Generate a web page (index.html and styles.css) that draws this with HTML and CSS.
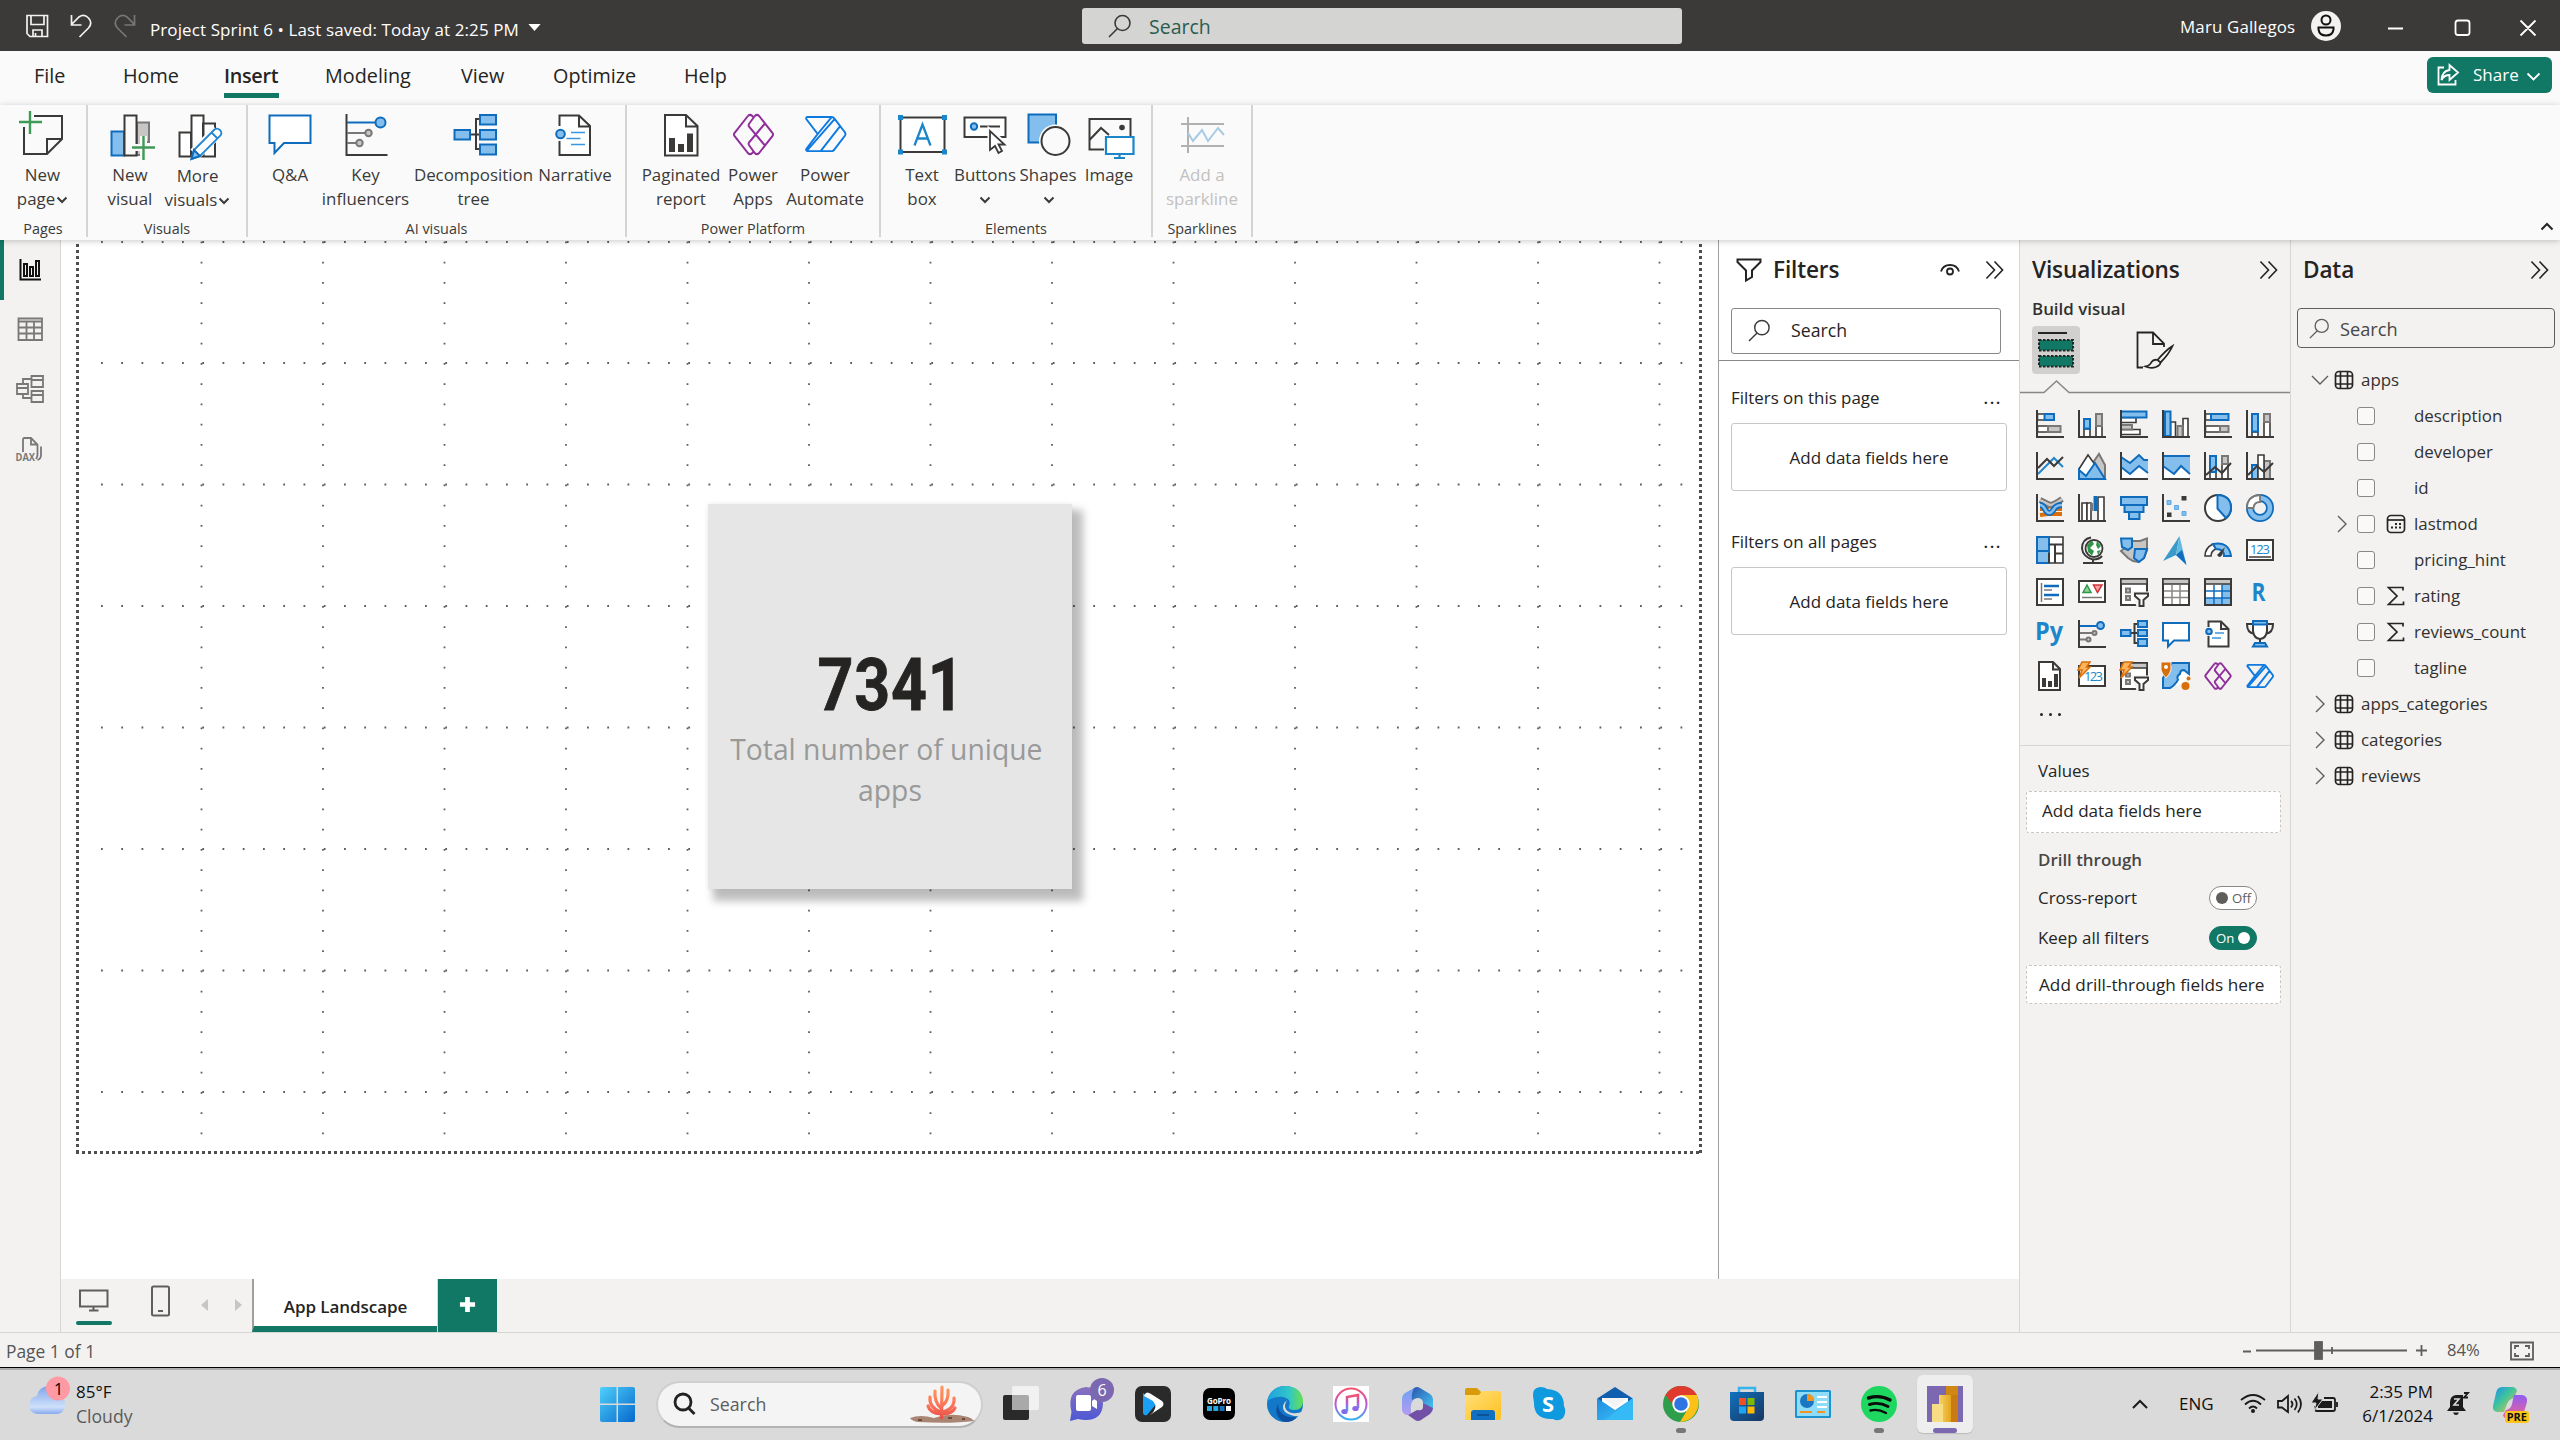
FILE: index.html
```html
<!DOCTYPE html>
<html lang="en">
<head>
<meta charset="utf-8">
<title>Project Sprint 6</title>
<link rel="stylesheet" href="styles.css">
</head>
<body>
<svg class="defs" aria-hidden="true">
  <defs>
    <symbol id="mag" viewBox="0 0 24 24"><circle cx="14.500" cy="9" r="7.500"/><path d="M9.500 14.500L1 23"/></symbol>
    <symbol id="chevs" viewBox="0 0 20 20"><path d="M1.500 1L10 10L1.500 19M10 1L18.500 10L10 19"/></symbol>
    <symbol id="tbl" viewBox="0 0 20 20"><rect x="1.500" y="1.500" width="17" height="17" rx="3.500"/><path d="M1.500 6H18.500M1.500 14H18.500M6.500 1.500V18.500M13.500 1.500V18.500"/></symbol>
    <symbol id="down" viewBox="0 0 12 8"><path d="M1.500 1.500L6 6L10.500 1.500"/></symbol>
    <symbol id="apps" viewBox="0 0 44 44"><path d="M16.500 2.800L2.500 20.500Q1.500 22 2.500 23.500L16.500 41.200Q18.500 43 20.500 41.200L22 39.500M16.500 2.800Q18.500 1 20.500 2.800L22 4.500M23.500 2.800Q25.500 1 27.500 2.800L41.500 20.500Q42.500 22 41.500 23.500L27.500 41.200Q25.500 43 23.500 41.200L17.500 33Q16.500 31.500 17.500 30L33.500 11M33.500 33L17.500 14Q16.500 12.500 17.500 11L23.500 2.800"/></symbol>
    <symbol id="auto" viewBox="0 0 44 44"><path d="M3.500 4.500H28.500Q30 4.500 31 6L42 20.500Q43 22 42 23.500L31 38Q30 39.500 28.500 39.500H3.500Q1.500 39 2.500 37L14 22L2.500 7Q1.500 5 3.500 4.500ZM14 22L28.500 4.500M3 39L31.500 6.500M17 39.500L37 14"/></symbol>
    <linearGradient id="gWin" x1="0" y1="0" x2="1" y2="1"><stop offset="0" stop-color="#4fd0fb"/><stop offset="1" stop-color="#0568cc"/></linearGradient>
    <linearGradient id="gCloud" x1="0" y1="0" x2="0" y2="1"><stop offset="0" stop-color="#7ea5ea"/><stop offset=".75" stop-color="#cfe0fb"/><stop offset="1" stop-color="#86aaf0"/></linearGradient>
    <linearGradient id="gCoral" x1="0" y1="0" x2="0" y2="1"><stop offset="0" stop-color="#ff9a5e"/><stop offset=".6" stop-color="#fb7257"/><stop offset="1" stop-color="#e8504a"/></linearGradient>
    <linearGradient id="gChat" x1="0" y1="0" x2="0" y2="1"><stop offset="0" stop-color="#8a70bd"/><stop offset="1" stop-color="#4c57d6"/></linearGradient>
    <linearGradient id="gEdge" x1="0" y1="0" x2="1" y2="0"><stop offset="0" stop-color="#1f9fe0"/><stop offset=".6" stop-color="#30c5c9"/><stop offset="1" stop-color="#66e04f"/></linearGradient>
    <linearGradient id="gTunes" x1="0" y1="0" x2="0" y2="1"><stop offset="0" stop-color="#f4516c"/><stop offset=".55" stop-color="#b45be0"/><stop offset="1" stop-color="#35b3f2"/></linearGradient>
    <linearGradient id="gM1" x1="0" y1="0" x2="0" y2="1"><stop offset="0" stop-color="#6ea3f4"/><stop offset="1" stop-color="#b49af0"/></linearGradient>
    <linearGradient id="gM2" x1="0" y1="0" x2="1" y2="1"><stop offset="0" stop-color="#2a55ad"/><stop offset="1" stop-color="#48c8f5"/></linearGradient>
    <linearGradient id="gFold" x1="0" y1="0" x2="1" y2="1"><stop offset="0" stop-color="#ffe07a"/><stop offset="1" stop-color="#ffc020"/></linearGradient>
    <linearGradient id="gStore" x1="0" y1="0" x2="1" y2="1"><stop offset="0" stop-color="#1172c0"/><stop offset="1" stop-color="#18355f"/></linearGradient>
    <linearGradient id="gMail" x1="0" y1="0" x2="1" y2="1"><stop offset="0" stop-color="#1f8be0"/><stop offset="1" stop-color="#3cc3f8"/></linearGradient>
    <linearGradient id="gBi" x1="0" y1="0" x2="1" y2="0"><stop offset="0" stop-color="#f7d264"/><stop offset="1" stop-color="#e3a51e"/></linearGradient>
    <linearGradient id="gCo" x1="0" y1="0" x2="1" y2="1"><stop offset="0" stop-color="#1e8ff0"/><stop offset=".45" stop-color="#3fc49c"/><stop offset="1" stop-color="#f5c33b"/></linearGradient>
    <linearGradient id="gCo2" x1="0" y1="0" x2="0" y2="1"><stop offset="0" stop-color="#8f5cf5"/><stop offset="1" stop-color="#f4658a"/></linearGradient>
  </defs>
</svg>

<header class="titlebar">
  <svg class="tb-icons" viewBox="0 0 120 30"><g class="w"><path d="M3 4.500H23.500V25.500H6L3 22.500Z"/><path d="M7 4.500V13.500H20V4.500M9 25.500V19H18V25.500M11.500 22V25"/><path d="M47.500 4V14H57.500M47.500 13.500L55 6Q60 2.500 64.500 7Q69 12 64.500 17L55.500 26"/></g><g class="w dim"><path d="M110.500 4V14H100.500M110.500 13.500L103 6Q98 2.500 93.500 7Q89 12 93.500 17L102.500 26"/></g></svg>
  <span class="doc">Project Sprint 6 • Last saved: Today at 2:25 PM</span>
  <svg class="doc-caret" viewBox="0 0 14 8"><path d="M0 0H14L7 8Z"/></svg>
  <div class="top-search"><svg><use href="#mag"/></svg><span>Search</span></div>
  <div class="user">
    <span>Maru Gallegos</span>
    <svg class="avatar" viewBox="0 0 30 30"><circle cx="15" cy="15" r="15" fill="#f3f2f1"/><g fill="none" stroke="#111" stroke-width="2"><circle cx="15" cy="9" r="4.500"/><path d="M7.500 16.500H22.500V18.500Q21.500 24.500 15 24.500Q8.500 24.500 7.500 18.500Z"/></g></svg>
  </div>
  <svg class="win-btns" viewBox="0 0 150 18"><path d="M1 9.500H16M68.500 4Q68.500 1.500 71 1.500H80Q82.500 1.500 82.500 4V13.500Q82.500 16 80 16H71Q68.500 16 68.500 13.500ZM133.500 1.500L148.500 16.500M148.500 1.500L133.500 16.500"/></svg>
</header>

<nav class="tabs">
  <span class="tab t-file">File</span><span class="tab t-home">Home</span><span class="tab t-insert on">Insert</span><span class="tab t-model">Modeling</span><span class="tab t-view">View</span><span class="tab t-opt">Optimize</span><span class="tab">Help</span>
  <button class="share"><svg viewBox="0 0 24 24"><path d="M8 4.500H2.500V21.500H19.500V17M13.500 7V2L22 9.500L13.500 17V12Q8 12 5.500 17Q6 8 13.500 7Z"/></svg><span>Share</span><svg class="sc" viewBox="0 0 14 9"><path d="M1 1.500L7 7.500L13 1.500"/></svg></button>
</nav>

<section class="ribbon">
  <div class="group g-pages"><div class="items">
    <div class="item w70"><svg viewBox="0 0 48 48"><path class="k" fill="#fafafa" d="M15 6H43V29L28 44H5V17M28 44V29H43"/><path class="gp" d="M0 12H23M11 1V24"/></svg><span>New<br>page<svg class="dn"><use href="#down"/></svg></span></div>
  </div><div class="glabel">Pages</div></div>

  <div class="group g-visuals"><div class="items">
    <div class="item w66"><svg viewBox="0 0 48 48"><path class="ga" d="M31 12.500H43V32H38V45H31Z"/><path class="bl" d="M5.500 21.500H18V45.500H5.500Z"/><path class="k" fill="#fafafa" d="M18.500 5.500H30.500V45.500H18.500Z"/><path stroke="#fafafa" stroke-width="7" d="M37.500 26V50M26 37.500H49"/><path class="gp" d="M37.500 26V50M26 37.500H49"/></svg><span>New<br>visual</span></div>
    <div class="item w70 low"><svg viewBox="0 0 48 48"><path class="k" fill="#fff" d="M5.500 22.500H17V46.500H5.500ZM29 13.500H41V46.500H29ZM17.500 5.500H29.500V46.500H17.500Z"/><path stroke="#fafafa" stroke-width="13" d="M21 44L44 21"/><path fill="#fff" stroke="#1f86d2" stroke-width="1.800" d="M17.500 49L20 40L40.500 19.500Q43 17.500 46 20Q48.500 23 46.500 25.500L26 46ZM37.500 22.500L43.500 28.500"/><path class="bl" stroke-width="1" d="M17.500 49L20 40L26 46Z"/></svg><span>More<br>visuals<svg class="dn"><use href="#down"/></svg></span></div>
  </div><div class="glabel">Visuals</div></div>

  <div class="group g-ai"><div class="items">
    <div class="item w58"><svg viewBox="0 0 48 48"><path class="bo" d="M3.500 5.500H44.500V33H18L8.500 43V33H3.500Z"/></svg><span>Q&amp;A</span></div>
    <div class="item w92"><svg viewBox="0 0 48 48"><path class="k" d="M4.500 4V45H45.500"/><path class="bo" d="M5 12.500H34"/><circle class="bl" cx="38.500" cy="12.500" r="5"/><path stroke="#7a7876" stroke-width="2" d="M5 23H23M5 33H14"/><g class="ga"><circle cx="26.500" cy="23" r="3.200"/><circle cx="17.500" cy="33" r="3.200"/></g></svg><span>Key<br>influencers</span></div>
    <div class="item w124"><svg viewBox="0 0 48 48"><path class="k" d="M20 24.500H30M30 9H26V39H30"/><path class="bl" d="M4.500 20H20V29.500H4.500ZM30 5H46V14.500H30ZM30 20H46V29.500H30ZM30 34.500H46V44.500H30Z"/></svg><span>Decomposition<br>tree</span></div>
    <div class="item w80"><svg viewBox="0 0 48 48"><path class="k" fill="#fff" d="M8.500 16V5.500H28L39 16V45H8.500V31M28 5.500V16.500H39"/><circle class="bl" cx="9.500" cy="24" r="4.300"/><path stroke="#3a96dd" stroke-width="1.700" d="M20 22.500H34M15.500 28.500H29.500M20 34.500H34"/></svg><span>Narrative</span></div>
  </div><div class="glabel">AI visuals</div></div>

  <div class="group g-pp"><div class="items">
    <div class="item w80"><svg viewBox="0 0 48 48"><path class="k" fill="#fff" d="M8 5H29L40.500 16V45.500H8ZM29 5V16.500H40.500"/><path fill="#3b3a39" d="M12 28H18V42H12ZM21 34H27V42H21ZM30 23.500H36V42H30Z"/></svg><span>Paginated<br>report</span></div>
    <div class="item w64"><svg viewBox="0 0 48 48"><use href="#apps" class="pu" x="3" y="3" width="43" height="43"/></svg><span>Power<br>Apps</span></div>
    <div class="item w80"><svg viewBox="0 0 48 48"><use href="#auto" class="bu" x="2" y="2.500" width="45" height="43"/></svg><span>Power<br>Automate</span></div>
  </div><div class="glabel">Power Platform</div></div>

  <div class="group g-el"><div class="items">
    <div class="item w64"><svg viewBox="0 0 48 48"><path class="k" fill="#fff" d="M2.500 7.500H46.500V42H2.500Z"/><path fill="#1c86cb" d="M0 5H5V10H0ZM44 5H49V10H44ZM0 39.500H5V44.500H0ZM44 39.500H49V44.500H44Z"/><path fill="none" stroke="#1c86cb" stroke-width="2.300" d="M16.500 35.500L24.500 14.500L32.500 35.500M19.500 28.500H29.500"/></svg><span>Text<br>box</span></div>
    <div class="item w62"><svg viewBox="0 0 48 48"><path class="k" fill="#fff" d="M3.500 7.500H44.500V27H3.500Z"/><circle class="bl" cx="13" cy="16.500" r="3.200"/><path class="k" d="M19 16.500H39"/><path fill="#fff" stroke="#fafafa" stroke-width="5" d="M29 21V40L34 36L38 43L41 41L38 34H44Z"/><path fill="#fff" stroke="#3b3a39" stroke-width="1.800" d="M29 21V40L34 36L37.500 43L41 41L37.500 34.500H43.500Z"/></svg><span>Buttons<br><svg class="dn"><use href="#down"/></svg></span></div>
    <div class="item w64"><svg viewBox="0 0 48 48"><path class="bl" d="M4.500 4.500H32V32.500H4.500Z"/><circle cx="31.500" cy="31" r="16.500" fill="#fafafa"/><circle class="k" cx="31.500" cy="31" r="14"/></svg><span>Shapes<br><svg class="dn"><use href="#down"/></svg></span></div>
    <div class="item w58"><svg viewBox="0 0 48 48"><path class="k" d="M45.500 26V9H4.500V39.500H19M4.500 30L16 18L24 25"/><circle cx="37" cy="17.500" r="2.800" fill="#3b3a39"/><path fill="#fff" stroke="#1c86cb" stroke-width="2.200" d="M21 27H48.500V44H21ZM34.500 44V48M29 48H40"/></svg><span>Image</span></div>
  </div><div class="glabel">Elements</div></div>

  <div class="group g-sp"><div class="items">
    <div class="item w80 off"><svg viewBox="0 0 48 48"><path fill="none" stroke="#b3b1af" stroke-width="2" d="M3 14H46M3 36H46M10 7V43"/><path fill="none" stroke="#a7cbe4" stroke-width="2" d="M10 23L15 31L24 20L30 31L40 18L46 25"/></svg><span>Add a<br>sparkline</span></div>
  </div><div class="glabel">Sparklines</div></div>
  <svg class="collapse" viewBox="0 0 14 9"><path d="M1.500 7.500L7 2L12.500 7.500"/></svg>
</section>

<main class="work">
  <aside class="rail">
    <div class="rcell on"><svg class="ink" viewBox="0 0 28 28"><path d="M4.500 3V23.500H25M8 8H11V20H8ZM14 11H17V20H14ZM20 5H23V20H20Z"/></svg></div>
    <div class="rcell"><svg viewBox="0 0 28 28"><path d="M2.500 2.500H26V24H2.500ZM2.500 5.500H26M2.500 11.500H26M2.500 17.500H26M10.500 5.500V24M18 5.500V24"/></svg></div>
    <div class="rcell"><svg viewBox="0 0 28 28"><path d="M15.500 0H27V11H15.500ZM15.500 4H27M15.500 15H27V26H15.500ZM15.500 19H27M1 8H12V18H1ZM1 12H12M7 8V3H15.500M7 18V22H15.500"/></svg></div>
    <div class="rcell"><svg viewBox="0 0 28 28"><path d="M7 16V3.500Q7 2 8.500 2H15L21.500 8.500V19Q21.500 21 20 23M15 2V8.500H21.500M25 10.500V19Q25 23 21.500 24"/><text x="-.5" y="25" textLength="19.500" lengthAdjust="spacingAndGlyphs">DAX</text></svg></div>
  </aside>

  <div class="center">
    <div class="upper">
      <div class="canvas">
        <svg class="page" viewBox="61 240 1657 1038">
          <g class="grid">
            <path d="M101 242H1697M101 363H1697M101 484.500H1697M101 606H1697M101 727.500H1697M101 849H1697M101 970.500H1697M101 1092H1697"/>
            <path d="M201.500 241.500V1148M323 241.500V1148M444.500 241.500V1148M566 241.500V1148M687.500 241.500V1148M809 241.500V1148M930.500 241.500V1148M1052 241.500V1148M1173.500 241.500V1148M1295 241.500V1148M1416.500 241.500V1148M1538 241.500V1148M1659.500 241.500V1148"/>
          </g>
          <path class="edge" d="M77.500 244V1153M1700.500 244V1153M76 1152.500H1702"/>
        </svg>
        <div class="card"><div class="num">7341</div><div class="cap">Total number of unique&nbsp;<br>apps</div></div>
      </div>
      <aside class="filters">
        <div class="phead"><svg class="funnel" viewBox="0 0 26 24"><path d="M1.500 1.500H24.500V4L16 12.500V19L10 22.500V12.500L1.500 4Z"/></svg><h2>Filters</h2><svg class="eye" viewBox="0 0 20 14"><path d="M1 8.500Q3 2 10 2Q17 2 19 8.500"/><circle cx="10" cy="8.500" r="3"/></svg><svg class="chev"><use href="#chevs"/></svg></div>
        <div class="fsearch"><svg><use href="#mag"/></svg><span>Search</span></div>
        <div class="fsec first"><div class="frow"><span>Filters on this page</span><i>...</i></div><div class="fbox">Add data fields here</div></div>
        <div class="fsec"><div class="frow"><span>Filters on all pages</span><i>...</i></div><div class="fbox">Add data fields here</div></div>
      </aside>
    </div>
    <footer class="pages">
      <svg class="views" viewBox="0 0 112 53"><path d="M19 11.500H46.500V27.500H19ZM32.500 28V31M28 31.500H37.500M91 9Q91 7.500 92.500 7.500H106.500Q108 7.500 108 9V35Q108 36.500 106.500 36.500H92.500Q91 36.500 91 35ZM97 32H102"/><rect x="15" y="42" width="36" height="4" rx="2" fill="#117865"/></svg>
      <svg class="arrows" viewBox="0 0 40 12"><path d="M7 0V12L0 6ZM34 0V12L41 6Z"/></svg>
      <div class="ptab">App Landscape</div>
      <div class="padd"><svg viewBox="0 0 18 18"><path d="M9 1V17M1 9H17"/></svg></div>
    </footer>
  </div>

  <aside class="viz">
    <div class="phead"><h2>Visualizations</h2><svg class="chev"><use href="#chevs"/></svg></div>
    <h3>Build visual</h3>
    <div class="modes">
      <div class="mode"><svg viewBox="0 0 36 36"><path stroke="#252423" stroke-width="2" d="M0 1H29"/><path fill="#117865" stroke="#252423" stroke-width="2" stroke-dasharray="2.500 1.500" d="M1 8H35V18.500H1ZM1 24H35V34.500H1Z"/></svg></div>
      <svg class="fmt" viewBox="0 0 38 38"><path d="M7 36.500H1.500V1.500H17L28 12.500V16M17 1.500V13H28M36.500 15Q30 19 21.500 29L24.500 31.500Q33 23 36.500 15ZM21.500 29Q17.500 28 15.500 31Q14 34.500 9.500 35.500Q15 38 20 36Q24.500 34 24.500 31.500"/></svg>
    </div>
    <svg class="notch" viewBox="0 0 270 14"><path d="M0 12.500H24L36.500 1L49 12.500H270"/></svg>
    <div class="vgrid">
      <svg viewBox="0 0 28 28"><path class="wh" d="M1.500 4H9V10H1.500ZM1.500 16H12V22H1.500Z"/><path class="bl" d="M8.500 4H18V10H8.500Z"/><path class="ga" d="M12 16H24.500V22H12Z"/><path class="k" d="M1 0V27H28"/></svg>
      <svg viewBox="0 0 28 28"><path class="wh" d="M6 19H12V27H6ZM18 16H24V27H18Z"/><path class="bl" d="M6 9H12V18.500H6Z"/><path class="ga" d="M18 4H24V16H18Z"/><path class="k" d="M1 0V27H28"/></svg>
      <svg viewBox="0 0 28 28"><path class="wh" d="M1 7.500H16V12.500H1ZM1 19.500H20V24.500H1Z"/><path class="ga" d="M1 15H12V19.500H1Z"/><path class="bl" d="M1 1.500H26.500V7.500H1Z"/><path class="k" d="M1 0V27H28"/></svg>
      <svg viewBox="0 0 28 28"><path class="wh" d="M8.500 12H13.500V27H8.500ZM21 8.500H26V27H21Z"/><path class="ga" d="M15.500 16H20.500V27H15.500Z"/><path class="bl" d="M3 1.500H8.500V26H3Z"/><path class="k" d="M1 0V27H28"/></svg>
      <svg viewBox="0 0 28 28"><path class="wh" d="M1.500 4H7V10H1.500ZM1.500 16H16V22H1.500Z"/><path class="bl" d="M7 4H24.500V10H7Z"/><path class="ga" d="M16 16H24.500V22H16Z"/><path class="k" d="M1 0V27H28"/></svg>
      <svg viewBox="0 0 28 28"><path class="wh" d="M6 22H12V27H6ZM18 12H24V27H18Z"/><path class="bl" d="M6 4H12V21.500H6Z"/><path class="ga" d="M18 4H24V12H18Z"/><path class="k" d="M1 0V27H28"/></svg>

      <svg viewBox="0 0 28 28"><path fill="none" stroke="#1f86d2" stroke-width="2" d="M2 22L18 6L27 15"/><path class="k" d="M2 16L11 7L18 14L27 5"/><path class="k" d="M1 0V27H28"/></svg>
      <svg viewBox="0 0 28 28"><path class="ga" d="M14 12L21 2L27 13V26H18Z"/><path class="wh" d="M1 17L10 3L18 14L12 26H1Z"/><path class="bl" d="M1 18L8 24L17 11L27 27H1Z"/></svg>
      <svg viewBox="0 0 28 28"><path fill="#fff" d="M2 10H27V26H2Z"/><path fill="#83beec" d="M1 5L10 11L19 3L24 8H28V21L19 14L10 22L1 15Z"/><path fill="none" stroke="#0f6cbd" stroke-width="2" d="M1 5L10 11L19 3L24 8H28M1 15L10 22L19 14L28 21"/><path class="k" d="M1 0V27H28"/></svg>
      <svg viewBox="0 0 28 28"><path fill="#fff" d="M2 10H27V26H2Z"/><path fill="#83beec" d="M1 4H28V21L19 14L12 22L1 14Z"/><path fill="none" stroke="#0f6cbd" stroke-width="2" d="M1 4H28M1 14L12 22L19 14L28 22"/><path class="k" d="M1 0V27H28"/></svg>
      <svg viewBox="0 0 28 28"><path class="wh" d="M6 18H12V27H6ZM18 12H24V27H18Z"/><path class="bl" d="M6 4H12V20H6Z"/><path class="ga" d="M18 4H24V12H18Z"/><path class="k" d="M2 23L11 15L18 21L27 11M1 0V27H28"/></svg>
      <svg viewBox="0 0 28 28"><path class="bl" d="M6 13H12V27H6Z"/><path class="ga" d="M18 9H24V27H18Z"/><path class="wh" d="M12 3H18V27H12Z"/><path class="k" d="M2 23L11 14L18 20L27 11M1 0V27H28"/></svg>

      <svg viewBox="0 0 28 28"><path fill="none" stroke="#d86f0a" stroke-width="4" d="M4 15H9Q15 10 20 15H26M4 21L12 20H26"/><path fill="none" stroke="#7a7876" stroke-width="6" d="M4 6Q10 9 14 11Q18 11 26 5"/><path fill="none" stroke="#c8c6c4" stroke-width="2.500" d="M4 6Q10 9 14 11Q18 11 26 5"/><path fill="none" stroke="#0f6cbd" stroke-width="6" d="M4 11Q7 11 9 15Q13 23 18 15Q20 11 26 11"/><path fill="none" stroke="#83beec" stroke-width="2.500" d="M4 11Q7 11 9 15Q13 23 18 15Q20 11 26 11"/><path class="k" d="M1 0V27H28"/></svg>
      <svg viewBox="0 0 28 28"><path class="wh" d="M4 9H9V27H4ZM20 3H26V27H20Z"/><path class="wh" d="M9 9H13V27H9Z"/><path fill="#7a7876" d="M12 9H15V17H12Z"/><path fill="#0f6cbd" d="M15.500 2H19V17H15.500Z"/><path class="k" d="M1 0V27H28"/></svg>
      <svg viewBox="0 0 28 28"><path class="bl" d="M1 3H27V11H1ZM4.500 11H23.500V18H4.500ZM9 18H19.500V25H9Z"/></svg>
      <svg viewBox="0 0 28 28"><path fill="#83beec" stroke="#5da7e2" d="M5 6.500H9V10.500H5ZM12.500 11.500H16.500V15.500H12.500ZM20 17.500H24V21.500H20Z"/><path fill="#3b3a39" d="M19.500 2H24.500V6.500H19.500ZM5 18.500H9.500V23H5Z"/><path class="k" d="M1 0V27H28"/></svg>
      <svg viewBox="0 0 28 28"><circle class="k" cx="14" cy="14" r="13" fill="#fff"/><path class="bl" d="M13.500 1V14.500L22 24Q27 19.500 27 14Q27 1.500 13.500 1Z"/></svg>
      <svg viewBox="0 0 28 28"><circle cx="14" cy="14" r="10" fill="none" stroke="#0f6cbd" stroke-width="8"/><circle cx="14" cy="14" r="10" fill="none" stroke="#83beec" stroke-width="4.500"/><path fill="#fff" stroke="#7a7876" stroke-width="1.800" d="M1 14Q1 2 14 1V8Q8 8 7.500 14Z"/></svg>

      <svg viewBox="0 0 28 28"><path class="wh" d="M1 1H27V27H1Z"/><path class="bl" d="M1 1H13V15H1ZM1 15H13V27H1Z"/><path class="k" d="M13 8.500H27M19 8.500V27M13 17V27M19 17.500H27"/></svg>
      <svg viewBox="0 0 28 28"><circle cx="16" cy="12.500" r="8.500" fill="#fff" stroke="#3b3a39" stroke-width="1.800"/><path fill="#2f9547" d="M9 9L14 4.500L16 8L12 12L16 15L14 19.500L10 16ZM19 5L23 10L20 13L18 9ZM19 15L23 14L20 19Z"/><path class="k" d="M13 1.500Q4 3 4 12.500Q5 21 15 23.500Q21 23.500 24 20M15 23.500V27M5 27H25"/></svg>
      <svg viewBox="0 0 28 28"><path class="ga" d="M13 5H20L27 2.500V14L24 22L18 26L13 25L8 22L1 15Z"/><path class="bl" d="M1 2.500H12V11L8 14L2 11ZM15 13H27L24 22L19 26L14 22Z"/></svg>
      <svg viewBox="0 0 28 28"><path fill="#3a9bca" d="M17.500 0L1 25L14 19Z"/><path fill="#63b9e0" d="M17.500 0L14 19L24.500 29Z"/><path fill="#106ebe" d="M14 19L24.500 29L20 14Z"/></svg>
      <svg viewBox="0 0 28 28"><path class="wh" d="M1 20Q1 12 9 8L12 13Q7 15 7 20Z"/><path class="bl" d="M9 8Q25 5 27 20H20Q20 13 12 13Z"/><path fill="#3b3a39" d="M21 11L18 19Q16 23 13 19Z"/></svg>
      <svg viewBox="0 0 28 28"><path class="wh dk" d="M1 4H27V24H1Z"/><path stroke="#3b3a39" stroke-width="1.500" d="M3 21H25"/><text class="n123" x="4" y="18" textLength="20">123</text></svg>

      <svg viewBox="0 0 28 28"><path class="wh dk" d="M1 1H27V27H1Z"/><path stroke="#0f6cbd" stroke-width="2.500" d="M8 8H23M8 17H23"/><path stroke="#7a7876" stroke-width="1.500" d="M5.500 5V24M8 12H16M8 21H16"/></svg>
      <svg viewBox="0 0 28 28"><path class="wh dk" d="M1 3H27V24H1Z"/><path fill="#8fd19e" stroke="#2f9547" stroke-width="1.500" d="M5 14.500L9 7L13 14.500Z"/><path fill="#f3a3a3" stroke="#d13438" stroke-width="1.500" d="M15.500 7H24L19.500 14.500Z"/><path stroke="#7a7876" stroke-width="1.500" d="M4 19.500H24"/></svg>
      <svg viewBox="0 0 28 28"><path class="wh dk" d="M1 1H27V27H1Z"/><path fill="#c8c6c4" stroke="#3b3a39" stroke-width="1.500" d="M1 1H27V6H1Z"/><path class="ga" d="M6 10.500H10V14.500H6ZM6 18H10V22H6Z"/><path fill="#fff" stroke="#f3f2f1" stroke-width="5" d="M15 16H28V28H19Z"/><path class="wh dk" d="M15 15.500H28V18L23.500 22V28H19.500V22L15 18Z"/></svg>
      <svg viewBox="0 0 28 28"><path class="wh dk" d="M1 1H27V27H1Z"/><path fill="#c8c6c4" stroke="#3b3a39" stroke-width="1.500" d="M1 1H27V6H1Z"/><path stroke="#8a8886" stroke-width="1.500" d="M2 13H26M2 19.500H26M10 7V26M18 7V26"/></svg>
      <svg viewBox="0 0 28 28"><path fill="#fff" d="M1 1H27V27H1Z"/><path fill="#83beec" d="M18 6H27V27H1V20H18Z"/><path fill="#c8c6c4" stroke="#3b3a39" stroke-width="1.500" d="M1 1H27V6H1Z"/><path stroke="#0f6cbd" stroke-width="1.500" d="M2 13H26M2 20H26M10 7V26M18 7V26"/><path class="k" d="M1 1H27V27H1Z"/></svg>
      <svg viewBox="0 0 28 28"><text class="ltr" x="5.500" y="22.500" textLength="14" lengthAdjust="spacingAndGlyphs">R</text></svg>

      <svg viewBox="0 0 28 28"><text class="ltr" x="-1" y="20" textLength="28" lengthAdjust="spacingAndGlyphs">Py</text></svg>
      <svg viewBox="0 0 28 28"><path class="bo" d="M1 6H18"/><circle class="bl" cx="22.500" cy="5.500" r="3.500"/><path stroke="#7a7876" stroke-width="2" d="M1 13H15M1 19.500H8"/><g class="ga"><circle cx="16.500" cy="13" r="2"/><circle cx="10.500" cy="19.500" r="2"/></g><path class="k" d="M1 0V27H28"/></svg>
      <svg viewBox="0 0 28 28"><path class="k" d="M10 13H18M18 4H14.500V23H18"/><path class="bl" d="M1 10H10.500V16H1ZM18 1H27V7H18ZM18 10H27V16H18ZM18 19H27V26H18Z"/></svg>
      <svg viewBox="0 0 28 28"><path class="bo" fill="#fff" d="M1 3H27V20.500H12L6 26.500V20.500H1Z"/></svg>
      <svg viewBox="0 0 28 28"><path class="k" fill="#fff" d="M4.500 7V1.500H17L24.500 9V26.500H4.500V16M17 1.500V9H24.500"/><circle class="bl" cx="5" cy="11.500" r="2.800"/><path stroke="#3a96dd" stroke-width="1.500" d="M11 13H20M8 18H17"/></svg>
      <svg viewBox="0 0 28 28"><path class="k" d="M7 4H1Q1 13 8 13.500M21 4H27Q27 13 20 13.500M14 19V24"/><path class="wh dk" d="M7 2H21V11Q20 18.500 14 19Q8 18.500 7 11Z"/><path class="bl" d="M7 1H21V4.500H7ZM9 23H19L21 26.500H7Z"/></svg>

      <svg viewBox="0 0 28 28"><path class="k" fill="#fff" d="M3 0H17L24 7V28H3ZM17 0V7.500H24"/><path fill="#3b3a39" d="M6 16H10V25H6ZM12 19H16V25H12ZM18 12H22V25H18Z"/></svg>
      <svg viewBox="0 0 28 28"><path class="wh dk" d="M1 4H27V24H1Z"/><text class="n123" x="6" y="19" textLength="19">123</text><path fill="#fdb35b" stroke="#d86f0a" stroke-width="1.500" d="M4 0H12L8.500 5H12L1 16L4 8H0Z"/></svg>
      <svg viewBox="0 0 28 28"><path class="wh dk" d="M1 1H27V27H1Z"/><path fill="#c8c6c4" stroke="#3b3a39" stroke-width="1.500" d="M1 1H27V6H1Z"/><path class="ga" d="M6 11.500H10V14.500H6ZM6 18H10V22H6Z"/><path fill="#fff" stroke="#f3f2f1" stroke-width="5" d="M15 16H28V28H19Z"/><path class="wh dk" d="M15 15.500H28V18L23.500 22V28H19.500V22L15 18Z"/><path fill="#fdb35b" stroke="#d86f0a" stroke-width="1.500" d="M4 0H12L8.500 5H12L1 16L4 8H0Z"/></svg>
      <svg viewBox="0 0 28 28"><path class="bl" d="M10 1H27V12L22 8Q18 8 18 12Q14 14 16 18Q12 24 8 26H1V16Z"/><path fill="#fff" d="M21 10L25 13V17L18 22L14 24Q18 18 17 15Z"/><path fill="#d86f0a" stroke="#f3f2f1" d="M-1 0H9V8Q8 12 4 16Q0 12 -1 8Z"/><circle cx="4" cy="5" r="2" fill="#fff"/><circle cx="23.500" cy="24" r="4" fill="#d86f0a"/><circle cx="26.500" cy="16.500" r="2" fill="#d86f0a"/></svg>
      <svg viewBox="0 0 28 28"><use href="#apps" class="pu thick" width="28" height="28"/></svg>
      <svg viewBox="0 0 28 28"><use href="#auto" class="bu thick" width="28" height="28"/></svg>
    </div>
    <div class="more"><b></b><b></b><b></b></div>
    <div class="wells">
      <div class="wl">Values</div>
      <div class="well">Add data fields here</div>
      <div class="wh4">Drill through</div>
      <div class="trow"><span>Cross-report</span><div class="tog"><i></i>Off</div></div>
      <div class="trow"><span>Keep all filters</span><div class="tog yes">On<i></i></div></div>
      <div class="well drill">Add drill-through fields here</div>
    </div>
  </aside>

  <aside class="data">
    <div class="phead"><h2>Data</h2><svg class="chev"><use href="#chevs"/></svg></div>
    <div class="dsearch"><svg><use href="#mag"/></svg><span>Search</span></div>
    <ul class="tree">
      <li><svg class="cv" viewBox="0 0 18 18"><path d="M1 5L9 13L17 5"/></svg><svg class="ti"><use href="#tbl"/></svg>apps</li>
      <li class="f"><s></s><em></em>description</li>
      <li class="f"><s></s><em></em>developer</li>
      <li class="f"><s></s><em></em>id</li>
      <li class="f exp"><svg class="cv2" viewBox="0 0 18 18"><path d="M5 1L13 9L5 17"/></svg><s></s><em><svg viewBox="0 0 20 20"><rect x="1.500" y="1.500" width="17" height="17" rx="3.500"/><path d="M1.500 6H18.500"/><path class="dots" d="M9 10H11M13 10H15M5 13.500H7M9 13.500H11M13 13.500H15"/></svg></em>lastmod</li>
      <li class="f"><s></s><em></em>pricing_hint</li>
      <li class="f"><s></s><em><svg viewBox="0 0 20 20"><path d="M17 4.500V1.500H2.500L11 10L2.500 18.500H17.500V15.500"/></svg></em>rating</li>
      <li class="f"><s></s><em><svg viewBox="0 0 20 20"><path d="M17 4.500V1.500H2.500L11 10L2.500 18.500H17.500V15.500"/></svg></em>reviews_count</li>
      <li class="f"><s></s><em></em>tagline</li>
      <li><svg class="cv" viewBox="0 0 18 18"><path d="M5 1L13 9L5 17"/></svg><svg class="ti"><use href="#tbl"/></svg>apps_categories</li>
      <li><svg class="cv" viewBox="0 0 18 18"><path d="M5 1L13 9L5 17"/></svg><svg class="ti"><use href="#tbl"/></svg>categories</li>
      <li><svg class="cv" viewBox="0 0 18 18"><path d="M5 1L13 9L5 17"/></svg><svg class="ti"><use href="#tbl"/></svg>reviews</li>
    </ul>
  </aside>
</main>

<div class="status">
  <span>Page 1 of 1</span>
  <svg class="zoomer" viewBox="0 0 190 20"><path d="M3 11.500H11M16 10.500H167M92 7V14M176 10.500H187M181.500 5V16"/><rect x="75" y="2" width="7" height="17" fill="#605e5c"/></svg>
  <span class="pct">84%</span>
  <svg class="fit" viewBox="0 0 24 20"><path d="M1 1.500H23V18.500H1ZM5 8V5H9M15 5H19V8M19 12V15H15M9 15H5V12"/></svg>
</div>

<footer class="taskbar">
  <div class="weather">
    <svg viewBox="0 0 44 44"><path fill="url(#gCloud)" d="M9 38Q1 37 1 29Q2 21 9 20Q11 10 21 10Q31 11 33 20Q38 24 37 30Q36 37 29 38Z"/><circle cx="30" cy="12.500" r="12" fill="#ff99a4"/><text x="26" y="18.500">1</text></svg>
    <div><b>85°F</b><span>Cloudy</span></div>
  </div>
  <svg class="start" viewBox="0 0 36 36"><path fill="url(#gWin)" d="M2 0H17V17H0V2Q0 0 2 0ZM18.500 0H34Q36 0 36 2V17H18.500ZM0 18.500H17V36H2Q0 36 0 34ZM18.500 18.500H36V34Q36 36 34 36H18.500Z"/></svg>
  <div class="tsearch"><svg class="m" viewBox="0 0 24 24"><circle cx="10" cy="10" r="8"/><path d="M15.500 16L21.500 22"/></svg><span>Search</span>
    <svg class="coral" viewBox="0 0 64 40"><path fill="#a98573" d="M0 34Q10 30 24 34Q40 28 58 33Q62 34 64 37Q40 40 8 38Q2 37 0 34Z"/><path fill="#6b4a40" d="M8 35H12V37H8ZM38 33H42V35H38ZM52 34H55V36H52Z"/><path fill="none" stroke="url(#gCoral)" stroke-width="3.200" stroke-linecap="round" d="M31.500 34L32 3M31 28Q19 24 20 13M31 24Q24 18 25 7M32 28Q45 25 44 14M32 22Q39 17 38 6M31 30Q20 29 18 22M32 30Q42 30 45 24"/></svg></div>
  <div class="apps">
    <div><svg viewBox="0 0 36 36"><path fill="#2a2a2a" d="M0 11Q0 9 2 9H24Q26 9 26 11V32Q26 34 24 34H2Q0 34 0 32Z"/><path fill="#f1f1f1" d="M9 2Q9 0 11 0H34Q36 0 36 2V22Q36 24 34 24H9Z"/><path fill="#a9a9a9" d="M9 9H24Q26 9 26 11V24H9Z"/></svg></div>
    <div><svg class="big" viewBox="0 0 44 44"><path fill="url(#gChat)" d="M17 9Q34 10 34 26Q33 42 17 42Q13 42 9 41L1 43L2.500 34Q-3 12 17 9Z"/><path fill="#fff" d="M7 19Q7 17 9 17H20Q22 17 22 19V31Q22 33 20 33H9Q7 33 7 31ZM23 23L28 19V31L23 28Z"/><circle cx="33" cy="12" r="12" fill="#7c68b0"/><text x="28.500" y="18">6</text></svg></div>
    <div><svg viewBox="0 0 36 36"><rect width="36" height="36" rx="7" fill="#2a2a2b"/><path fill="#1b9ff5" d="M8 7L22 17L12 29Q8 30 8 26Z"/><path fill="#fff" d="M10 8Q12 5 16 8L27 15Q30 18 27 21L15 29Q24 22 18 15L9 10Z"/></svg></div>
    <div><svg viewBox="0 0 36 36"><rect x="2" y="2" width="32" height="32" rx="7" fill="#000"/><text class="gopro" x="6" y="18" textLength="24">GoPro</text><path fill="#27a9e1" d="M6 20H11V25H6ZM12.300 20H17.300V25H12.300Z"/><path fill="#1d6fb8" d="M18.600 20H23.600V25H18.600Z"/><path fill="#fff" d="M25 20H30V25H25Z"/></svg></div>
    <div><svg viewBox="0 0 36 36"><circle cx="18" cy="18" r="18" fill="#1478c8"/><path fill="url(#gEdge)" d="M0 16Q3 0 19 0Q35 1 36 15Q36 24 27 24Q21 24 22 20Q25 13 16 11Q5 10 0 16Z"/><path fill="#0d4f9e" d="M11 18Q12 33 30 31Q24 38 15 35Q6 28 11 18Z"/><path fill="#dadada" d="M20 14Q15 22 22 26Q28 29 37 25L34 30Q24 31 18 26Q13 20 20 14Z"/></svg></div>
    <div><svg viewBox="0 0 36 36"><rect width="36" height="36" fill="#fff"/><circle cx="18" cy="18" r="15.500" fill="none" stroke="url(#gTunes)" stroke-width="2"/><path fill="none" stroke="url(#gTunes)" stroke-width="2.500" d="M14 25V11L25 9V22"/><ellipse cx="11.500" cy="25.500" rx="3.200" ry="2.600" fill="#7e6cf0"/><ellipse cx="22.500" cy="22.500" rx="3.200" ry="2.600" fill="#8d66ea"/></svg></div>
    <div><svg viewBox="0 0 36 36"><path fill="url(#gM1)" d="M15 2L6 7Q3 9 3 12V24Q4 29 9 29L12 27Q10 15 19 9Z"/><path fill="url(#gM2)" d="M15 2Q18 0 21 2L31 8Q34 10 34 13V24L24 17Q24 12 18 12L13 14Q12 8 15 2Z"/><path fill="#7350a8" d="M24 17V21Q24 25 18 24L9 29L16 34Q19 36 22 34L31 28Q34 25 34 22Z"/></svg></div>
    <div><svg viewBox="0 0 36 36"><path fill="#d99a0b" d="M0 4Q0 2 2 2H12L16 6V12H0Z"/><path fill="url(#gFold)" d="M0 9H14L17 5H34Q36 5 36 7V32Q36 34 34 34H0Z"/><path fill="#0f6fc0" d="M6 34V27Q6 24 9 24H27Q30 24 30 27V34Z"/><path stroke="#0a4a87" stroke-width="1.500" d="M12 29H24"/></svg></div>
    <div><svg viewBox="0 0 36 36"><path fill="#0f9ae0" d="M2 10Q1 2 9 1Q14 1 16 3Q33 4 33 20Q36 26 32 32Q27 36 22 33Q3 34 3 17Z"/><text class="sk" x="11" y="26">S</text></svg></div>
    <div><svg viewBox="0 0 36 36"><path fill="#0f5fae" d="M18 1L35 12V18H1V12Z"/><path fill="#fff" d="M5 12H31V20L18 26L5 20Z"/><path fill="url(#gMail)" d="M0 12L18 24L36 12V34H0Z"/><path fill="#35baf5" d="M36 12L8 34H36Z"/><path fill="#f4f4f4" d="M6 12H30L18 22Z"/></svg></div>
    <div class="run"><svg viewBox="0 0 36 36"><circle cx="18" cy="18" r="18" fill="#2f9e4c"/><path fill="#e03a2e" d="M2.500 9Q8 0 18 0Q29 0 34 9H18L11 20Z"/><path fill="#fbc116" d="M18 9H34Q38 19 32 28Q26 36 17 36L26 21Z"/><circle cx="18" cy="18" r="8.700" fill="#fff"/><circle cx="18" cy="18" r="6.800" fill="#2f72e2"/></svg></div>
    <div><svg viewBox="0 0 36 36"><path fill="none" stroke="#35b5f0" stroke-width="2.500" d="M10 6V2H26V6"/><path fill="url(#gStore)" d="M1 6H35V31Q35 35 31 35H5Q1 35 1 31Z"/><path fill="#f25022" d="M10 12H17V19H10Z"/><path fill="#7fba00" d="M18.500 12H25.500V19H18.500Z"/><path fill="#21a4ef" d="M10 20.500H17V27.500H10Z"/><path fill="#ffb900" d="M18.500 20.500H25.500V27.500H18.500Z"/></svg></div>
    <div><svg viewBox="0 0 36 36"><rect y="4" width="36" height="28" rx="1.500" fill="#1c93cf"/><rect x="2" y="6" width="32" height="24" fill="#8fdcf8"/><circle cx="12" cy="15" r="7" fill="#1a78c2"/><path fill="#f39320" d="M12 15V8Q19 8 19 15Z"/><path stroke="#fff" stroke-width="2" d="M22 11H32M22 16H32M22 21H32"/><path stroke="#f39320" stroke-width="2" d="M5 26H17M22 26H30"/></svg></div>
    <div class="run"><svg viewBox="0 0 36 36"><circle cx="18" cy="18" r="18" fill="#1ed760"/><path fill="none" stroke="#0b0b0b" stroke-linecap="round" stroke-width="3.400" d="M7.500 12Q19 8.500 29 14"/><path fill="none" stroke="#0b0b0b" stroke-linecap="round" stroke-width="2.900" d="M8.500 18.500Q18 15.500 27 20.500"/><path fill="none" stroke="#0b0b0b" stroke-linecap="round" stroke-width="2.400" d="M9.500 24.500Q17 22.500 25 27"/></svg></div>
    <div class="act"><svg viewBox="0 0 36 36"><path fill="#7c68b0" d="M0 0H36V36H0Z"/><path fill="#d08812" d="M19 0H31V36H19Z"/><path fill="url(#gBi)" d="M12 9H24V36H12Z"/><path fill="#f8dc84" d="M5 18H16V36H5Z"/><path fill="#c97a10" d="M24 9H31V36H24Z"/></svg></div>
  </div>
  <div class="tray">
    <svg class="up" viewBox="0 0 16 10"><path d="M1 9L8 2L15 9"/></svg>
    <span class="eng">ENG</span>
    <svg class="sys" viewBox="0 0 98 22"><g class="ln"><path d="M1 7Q13 -3 25 7M5 11.500Q13 4 21 11.500M9 15.500Q13 11.500 17 15.500M38 8H42L48 3V19L42 14.500H38ZM51 8Q54 11 51 14.500M54.500 5.500Q59 11 54.500 17M58 3Q64 11 58 19.500"/><path d="M84 5H93Q95 5 95 7V16Q95 18 93 18H77Q75 18 75 16V13M97 9V14"/></g><circle cx="13" cy="18" r="2"/><path d="M80 8H92V15H78V12Z"/><path stroke="#dadada" d="M79 -2L71 10H76L74 18L83 6H78Z"/></svg>
    <div class="clock">2:35 PM<br>6/1/2024</div>
    <svg class="bell" viewBox="0 0 22 24"><path d="M9 3Q3 4 3 10V15L0 19H19L16 15V3ZM6 20.500H12Q11 23 9 23Q7 23 6 20.500Z"/><path fill="none" stroke="#dadada" stroke-width="1.600" d="M7 7H12L7 13H12"/><path fill="none" stroke="#1b1b1b" stroke-width="1.800" d="M17 1H21L17 5.500H21"/></svg>
    <div class="cop"><svg viewBox="0 0 36 36"><path fill="url(#gCo)" d="M10 1H20Q24 1 25 5L22 12Q17 13 15 18L12 26H7Q0 26 1 20L4 7Q5 1 10 1Z"/><path fill="url(#gCo2)" d="M22 9H30Q36 10 35 16L32 26Q31 32 25 33H16Q12 33 11 29L14 24Q19 23 20 18Z"/></svg><span>PRE</span></div>
  </div>
</footer>
</body>
</html>
```

FILE: styles.css
```css
* { box-sizing: border-box; }
body { margin: 0; width: 2560px; height: 1440px; overflow: hidden; display: flex; flex-direction: column; font: 16.9px/24px "Open Sans", "Noto Sans", sans-serif; color: #252423; background: #fff; }
svg { display: block; flex: none; overflow: visible; }
.defs { position: absolute; width: 0; height: 0; }
h2, h3, ul { margin: 0; padding: 0; }
button { font: inherit; border: 0; }

/* shared icon paint */
.k { stroke: #3b3a39; stroke-width: 2; }
.k:not([fill]) { fill: none; }
.bl { fill: #83beec; stroke: #0f6cbd; stroke-width: 2; }
.bo { fill: #fff; stroke: #0f6cbd; stroke-width: 2; }
.ga { fill: #c8c6c4; stroke: #7a7876; stroke-width: 2; }
.wh { fill: #fff; stroke: #3b3a39; stroke-width: 1.6; }
.dk { stroke-width: 2; }
.gp { fill: none; stroke: #3f9a56; stroke-width: 2.4; }
.pu { fill: none; stroke: #8f2d9b; stroke-width: 2; }
.bu { fill: none; stroke: #0f7be0; stroke-width: 2; }
.thick { stroke-width: 3; }

/* title bar */
.titlebar { height: 51px; background: #3b3a38; color: #fff; display: flex; align-items: center; flex: none; }
.tb-icons { width: 120px; height: 30px; margin-left: 24px; }
.w { fill: none; stroke: #f3f2f1; stroke-width: 1.7; }
.dim { stroke: #797775; }
.doc { width: 378px; margin-left: 6px; padding-top: 8px; font-size: 17px; letter-spacing: .1px; white-space: nowrap; }
.doc-caret { width: 13px; height: 7px; margin-top: 3px; fill: #fff; }
.top-search { width: 600px; height: 36px; margin-left: 541px; padding-left: 26px; background: #d4d4d2; border-radius: 3px; display: flex; align-items: center; gap: 17px; font-size: 19.5px; color: #2b5c50; }
.top-search span { padding-top: 2px; }
.top-search svg { width: 24px; height: 24px; fill: none; stroke: #3b3a39; stroke-width: 1.6; }
.user { margin-left: 498px; width: 161px; display: flex; justify-content: space-between; align-items: center; font-size: 16.9px; letter-spacing: .15px; white-space: nowrap; }
.user span { padding-top: 2px; }
.avatar { width: 30px; height: 30px; }
.win-btns { width: 150px; height: 18px; margin: 4px 0 0 46px; fill: none; stroke: #fff; stroke-width: 1.8; }

/* ribbon tabs */
.tabs { height: 54px; background: #fafafa; display: flex; padding-left: 34px; font-size: 19.8px; flex: none; }
.tab { height: 47px; padding-top: 13px; border-bottom: 5px solid transparent; margin-right: 46px; white-space: nowrap; }
.on.tab { font-weight: 600; border-bottom-color: #117865; letter-spacing: -.3px; }
.t-file { width: 31px; margin-right: 58px; }
.t-home { width: 55px; }
.t-insert { width: 55px; }
.t-model { width: 90px; }
.t-view { width: 46px; }
.t-opt { width: 85px; }
.share { margin: 6px 8px 0 auto; width: 125px; height: 36px; border-radius: 6px; background: #117865; color: #fff; display: flex; align-items: center; padding: 0 11px 0 9px; font-size: 17px; }
.share svg { width: 24px; height: 24px; margin-right: 13px; fill: none; stroke: #fff; stroke-width: 1.8; }
.share .sc { width: 15px; height: 9px; margin: 2px 0 0 auto; }

/* ribbon body */
.ribbon { height: 135px; background: #fafafa; display: flex; flex: none; position: relative; z-index: 2; box-shadow: 0 1px 6px rgba(0, 0, 0, .22); }
.group { height: 132px; border-right: 2px solid #d6d4d2; display: flex; flex-direction: column; padding-top: 5px; }
.items { display: flex; height: 107px; flex: none; }
.g-pages { width: 88px; }
.g-visuals { width: 160px; }
.g-ai { width: 379px; }
.g-pp { width: 254px; }
.g-el { width: 272px; }
.g-sp { width: 100px; }
.g-pages .items { padding-left: 8px; }
.g-visuals .items { padding-left: 9px; }
.g-ai .items { padding-left: 13px; }
.g-pp .items { padding-left: 14px; }
.g-el .items, .g-sp .items { padding-left: 9px; }
.item { display: flex; flex-direction: column; align-items: center; text-align: center; white-space: nowrap; font-size: 16.9px; color: #3b3a39; }
.item > svg { width: 48px; height: 48px; margin-bottom: 5px; }
.low > span { position: relative; top: 1px; }
.dn { display: inline-block; width: 12px; height: 8px; margin-left: 1px; vertical-align: 1px; fill: none; stroke: #3b3a39; stroke-width: 2; }
.off { color: #c3c1bf; }
.w58 { width: 58px; } .w62 { width: 62px; } .w64 { width: 64px; } .w66 { width: 66px; } .w70 { width: 69px; } .w80 { width: 80px; } .w92 { width: 93px; } .w124 { width: 123px; }
.glabel { text-align: center; font-size: 14.4px; line-height: 22px; margin-top: 1px; color: #3b3a39; }
.collapse { width: 14px; height: 9px; margin: 117px 6px 0 auto; fill: none; stroke: #252423; stroke-width: 2; }

/* workspace */
.work { display: flex; height: 1092px; flex: none; }
.rail { width: 61px; background: #f3f2f1; border-right: 1px solid #d8d6d4; }
.rcell { height: 60px; display: flex; align-items: center; justify-content: center; border-left: 4px solid transparent; padding-right: 4px; }
.rcell.on { border-left-color: #117865; }
.rcell svg { width: 28px; height: 28px; fill: none; stroke: #7a7876; stroke-width: 1.8; }
.rcell svg.ink { stroke: #111; stroke-width: 2; }
.rcell text { font: 700 10px "Open Sans", sans-serif; fill: #7a7876; stroke: none; }
.center { width: 1958px; display: flex; flex-direction: column; }
.upper { display: flex; height: 1039px; }
.canvas { width: 1657px; position: relative; }
.page { width: 1657px; height: 1038px; }
.grid path { fill: none; stroke: #605e5c; stroke-width: 1.8; stroke-dasharray: 1.8 18.45; }
.edge { fill: none; stroke: #504e4c; stroke-width: 3; stroke-dasharray: 3 3; }
.card { position: absolute; left: 647px; top: 264px; width: 364px; height: 385px; background: #e6e6e6; box-shadow: 8px 9px 8px 3px rgba(0, 0, 0, .26), 0 0 6px rgba(0, 0, 0, .06); text-align: center; padding-top: 146px; }
.num { font: 700 72px/72px Roboto, sans-serif; transform: scaleX(.87); letter-spacing: 1px; color: #252423; -webkit-text-stroke: .8px #252423; position: relative; left: 1px; }
.cap { font-size: 28.3px; line-height: 41px; color: #999; padding: 7px 10px 0; white-space: nowrap; }

.filters { flex: 1; border-left: 1px solid #a19f9d; }
.phead { height: 62px; display: flex; align-items: center; }
h2 { font-weight: 600; font-size: 22.6px; line-height: 30px; padding-bottom: 3px; letter-spacing: -.15px; }
.chev { width: 19px; height: 20px; fill: none; stroke: #252423; stroke-width: 1.7; margin: 0 0 2px auto; }
.filters .phead { padding: 0 15px 0 17px; }
.funnel { width: 26px; height: 24px; margin: 0 11px 2px 0; fill: none; stroke: #252423; stroke-width: 2; }
.eye { width: 20px; height: 14px; margin: 0 0 2px auto; fill: none; stroke: #252423; stroke-width: 1.8; }
.eye + .chev { margin-left: 25px; }
.fsearch { width: 270px; height: 46px; margin: 6px 0 6px 12px; border: 1px solid #8a8886; border-radius: 3px; display: flex; align-items: center; gap: 20px; padding: 0 0 2px 16px; font-size: 17.7px; }
.fsearch svg, .dsearch svg { width: 23px; height: 23px; fill: none; stroke: #3b3a39; stroke-width: 1.5; }
.fsec { padding: 25px 12px 0 12px; height: 145px; }
.fsec.first { border-top: 1px solid #8a8886; }
.frow { display: flex; justify-content: space-between; padding-right: 5px; margin-bottom: 13px; }
.frow i { font-style: normal; font-weight: 600; letter-spacing: 1.5px; }
.fbox { height: 68px; border: 1px solid #c8c6c4; border-radius: 3px; display: flex; align-items: center; justify-content: center; padding-top: 1px; font-size: 17px; }

.pages { height: 53px; background: #f3f2f1; display: flex; flex: none; }
.views { width: 112px; height: 53px; fill: none; stroke: #605e5c; stroke-width: 2; }
.views rect { stroke: none; }
.arrows { width: 40px; height: 12px; margin: 20px 11px 0 28px; fill: #c8c6c4; }
.ptab { width: 185px; border-left: 2px solid #a19f9d; border-bottom: 6px solid #117865; background: #fff; text-align: center; font-weight: 600; line-height: 55px; font-size: 17px; letter-spacing: -.05px; }
.padd { width: 60px; background: #117865; border-left: 1px solid #d8d6d4; display: flex; align-items: center; justify-content: center; }
.padd svg { width: 17px; height: 17px; margin-bottom: 2px; stroke: #fff; stroke-width: 5; }

.viz { width: 272px; background: #f3f2f1; border-left: 1px solid #d8d6d4; border-right: 1px solid #d8d6d4; }
.viz .phead { padding: 0 12px 0 12px; }
h3 { font-weight: 600; font-size: 16.9px; line-height: 26px; padding-left: 12px; height: 24px; margin-bottom: 0; margin-top: -6px; color: #323130; }
.modes { display: flex; padding: 6px 0 0 12px; }
.mode { width: 48px; height: 48px; background: #d2d0ce; border-radius: 4px; padding: 6px; }
.fmt { width: 38px; height: 38px; margin: 5px 0 0 56px; fill: none; stroke: #252423; stroke-width: 1.8; }
.notch { width: 270px; height: 14px; margin-top: 6px; fill: none; stroke: #8a8886; stroke-width: 1.6; }
.vgrid { display: grid; grid-template-columns: repeat(6, 28px); grid-auto-rows: 28px; gap: 14px; padding: 16px 0 0 16px; }
.vgrid svg { width: 28px; height: 28px; }
.n123 { font: 13px "Open Sans", sans-serif; fill: #1c86cb; }
.ltr { font: 700 24.5px "Open Sans", sans-serif; fill: #1c86cb; }
.more { display: flex; gap: 6px; padding: 23px 0 0 20px; height: 55px; }
.more b { width: 3px; height: 3px; border-radius: 50%; background: #252423; }
.wells { border-top: 1px solid #d8d6d4; padding-top: 13px; }
.wl, .wh4, .trow { padding-left: 18px; }
.well { width: 255px; height: 42px; margin: 8px 0 0 6px; border: 1px dashed #c8c6c4; border-radius: 3px; background: #fff; line-height: 38px; padding-left: 15px; white-space: nowrap; font-size: 17.1px; }
.wh4 { font-weight: 600; color: #484644; margin-top: 15px; }
.trow { display: flex; align-items: center; height: 24px; margin: 14px 0 0; }
.trow + .trow { margin-top: 16px; }
.trow span { width: 171px; margin-top: -1px; }
.tog { width: 48px; height: 24px; border: 1px solid #8a8886; border-radius: 12px; background: #fff; font-size: 13.2px; line-height: 24px; display: flex; align-items: center; gap: 4px; padding-left: 6px; color: #605e5c; }
.tog i { width: 12px; height: 12px; border-radius: 50%; background: #605e5c; }
.yes { background: #117865; border-color: #117865; color: #fff; }
.yes i { background: #fff; }
.drill { height: 39px; margin-top: 15px; line-height: 37px; padding-left: 12px; font-size: 17.2px; }

.data { width: 269px; background: #f3f2f1; }
.data .phead { padding: 0 11px 0 12px; }
.dsearch { width: 258px; height: 40px; margin: 6px 0 0 6px; border: 1px solid #605e5c; border-radius: 4px; display: flex; align-items: center; gap: 10px; padding: 1px 0 0 11px; font-size: 18.2px; color: #484644; }
.dsearch svg { width: 21px; height: 21px; stroke: #605e5c; }
.tree { list-style: none; padding-top: 13px; }
.tree li { height: 36px; display: flex; align-items: center; padding: 1px 0 0 20px; color: #323130; }
.tree svg { fill: none; stroke: #252423; stroke-width: 1.7; }
.cv { width: 18px; height: 18px; margin-right: 5px; }
.tree .cv, .tree .cv2 { stroke: #605e5c; stroke-width: 1.4; }
.cv2 { width: 18px; height: 18px; margin-right: 6px; }
.ti { width: 20px; height: 20px; margin-right: 7px; }
.tree .f { padding-left: 66px; }
.tree .exp { padding-left: 42px; }
.tree s { width: 18px; height: 18px; border: 1px solid #8a8886; border-radius: 3px; background: #faf9f8; }
.tree em { width: 39px; height: 20px; padding-left: 11px; }
.tree em svg { width: 20px; height: 20px; }
.dots { stroke-width: 2; }

/* status strip */
.status { height: 35px; background: #f3f2f1; border-top: 1px solid #d8d6d4; display: flex; align-items: center; padding: 2px 0 0 6px; color: #555; font-size: 17.4px; flex: none; }
.zoomer { width: 190px; height: 20px; margin: -2px 17px 0 auto; fill: none; stroke: #605e5c; stroke-width: 1.8; }
.pct { width: 63px; font-size: 16.6px; margin-top: -2px; }
.fit { width: 24px; height: 20px; margin: -1px 26px 0 0; fill: none; stroke: #605e5c; stroke-width: 1.8; }

/* taskbar */
.taskbar { height: 73px; border-top: 1px solid #000; background: linear-gradient(#adadad 2px, #dadada 2px); display: flex; align-items: center; flex: none; color: #111; }
.weather { width: 600px; display: flex; padding-left: 28px; }
.weather svg { width: 44px; height: 44px; margin: -4px 4px 0 0; }
.weather text { font: 16px "Open Sans", sans-serif; }
.weather b, .weather span { display: block; font-weight: 400; font-size: 17px; line-height: 24px; }
.weather span { color: #5a5a5a; font-size: 17.6px; }
.start { width: 35px; height: 35px; }
.tsearch { width: 327px; height: 47px; margin-left: 21px; border: 2px solid #cfcfcf; border-bottom-color: #b2b2b2; border-radius: 24px; background: #f4f4f4; display: flex; align-items: center; padding: 0 7px 0 15px; font-size: 17.8px; color: #5c5c5c; }
.m { width: 24px; height: 24px; margin-right: 13px; fill: none; stroke: #222; stroke-width: 2.8; }
.coral { width: 64px; height: 40px; margin-left: auto; }
.apps { display: flex; margin-left: 5px; }
.apps div { width: 66px; height: 58px; display: flex; align-items: center; justify-content: center; position: relative; }
.apps svg { width: 36px; height: 36px; }
.apps .big { width: 44px; height: 44px; margin: -8px -8px 0 0; }
.big text { font: 16px "Open Sans", sans-serif; fill: #fff; }
.gopro { font: 700 8px "Open Sans", sans-serif; fill: #fff; }
.sk { font: 700 22px "Open Sans", sans-serif; fill: #fff; }
.run::after, .act::after { content: ""; position: absolute; bottom: 0; left: 28px; width: 10px; height: 5px; border-radius: 3px; background: #777; }
.apps .act { width: 56px; margin-left: 5px; border-radius: 6px; background: #eee; box-shadow: 0 1px 1px #bbb; }
.act::after { left: 16px; width: 24px; background: #7c68b0; }
.tray { display: flex; align-items: center; margin-left: auto; padding-right: 32px; }
.up { width: 16px; height: 10px; margin-right: 31px; fill: none; stroke: #1b1b1b; stroke-width: 2; }
.eng { width: 61px; font-size: 17px; }
.sys { width: 98px; height: 22px; fill: #1b1b1b; }
.ln { fill: none; stroke: #1b1b1b; stroke-width: 1.8; }
.clock { width: 95px; text-align: right; font-size: 17px; line-height: 24px; }
.bell { width: 22px; height: 24px; margin: 0 23px 0 14px; fill: #1b1b1b; }
.cop { width: 36px; height: 36px; position: relative; }
.cop span { position: absolute; right: -1px; bottom: -1px; background: #fcc419; border-radius: 3px; font: 700 11px/12px "Open Sans", sans-serif; padding: 0 2px; }
```
